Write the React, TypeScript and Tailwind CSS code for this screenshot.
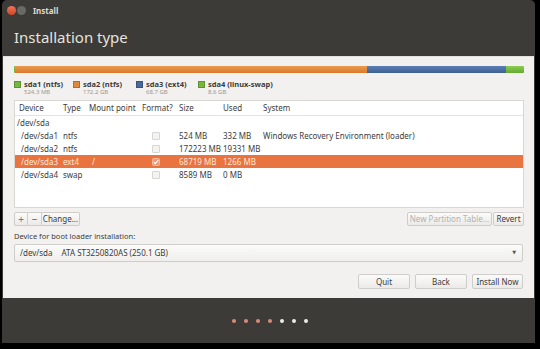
const font = { fontFamily: '"Noto Sans", "DejaVu Sans", sans-serif' };

const cols = "grid grid-cols-[44px_26px_53px_37px_44px_40px_1fr] items-center pl-[4px]";

type Row = {
  dev: string;
  type: string;
  mount: string;
  format: boolean;
  size: string;
  used: string;
  system: string;
  selected?: boolean;
};

const rows: Row[] = [
  { dev: "/dev/sda1", type: "ntfs", mount: "", format: false, size: "524 MB", used: "332 MB", system: "Windows Recovery Environment (loader)" },
  { dev: "/dev/sda2", type: "ntfs", mount: "", format: false, size: "172223 MB", used: "19331 MB", system: "" },
  { dev: "/dev/sda3", type: "ext4", mount: "/", format: true, size: "68719 MB", used: "1266 MB", system: "", selected: true },
  { dev: "/dev/sda4", type: "swap", mount: "", format: false, size: "8589 MB", used: "0 MB", system: "" },
];

const legend = [
  { name: "sda1 (ntfs)", size: "524.3 MB", color: "bg-[#76b83f]", w: "w-[59px]" },
  { name: "sda2 (ntfs)", size: "172.2 GB", color: "bg-[#e0883b]", w: "w-[63px]" },
  { name: "sda3 (ext4)", size: "68.7 GB", color: "bg-[#4a6a9e]", w: "w-[62px]" },
  { name: "sda4 (linux-swap)", size: "8.6 GB", color: "bg-[#76b83f]", w: "w-[90px]" },
];

function Check({ on }: { on: boolean }) {
  if (on) {
    return (
      <svg width="8" height="8" viewBox="0 0 8 8" className="ml-[10px]">
        <rect x="0.5" y="0.5" width="7" height="7" rx="1" fill="#f29a76" stroke="#f6b89c" />
        <path d="M1.8 4.2 L3.3 5.6 L6.3 2.2" stroke="#fff" strokeWidth="1.2" fill="none" />
      </svg>
    );
  }
  return <div className="ml-[10px] h-[8px] w-[8px] rounded-[1px] border border-[#d8d6d3] bg-[#f4f3f2]" />;
}

function Btn({ children, className = "" }: { children: React.ReactNode; className?: string }) {
  return (
    <div
      className={`flex items-center justify-center rounded-[2px] border border-[#cfcdc9] bg-gradient-to-b from-[#fbfbfa] to-[#ebeae8] text-[8px] text-[#3c3c3c] ${className}`}
    >
      {children}
    </div>
  );
}

export default function App() {
  return (
    <div className="h-[349px] w-[540px] overflow-hidden bg-black" style={font}>
      <div className="ml-[2px] flex h-[343px] w-[533px] flex-col overflow-hidden rounded-t-[5px] bg-[#3c3b37]">
        {/* title bar */}
        <div className="flex h-[21px] items-center pl-[5px]">
          <div className="h-[9px] w-[9px] rounded-full bg-gradient-to-b from-[#f0755a] to-[#d04424]" />
          <div className="ml-[1px] h-[9px] w-[9px] rounded-full bg-[#6a6964]" />
          <span className="ml-[7px] text-[8px] font-bold text-[#dfdbd2]">Install</span>
        </div>
        <div className="flex h-[35px] items-center pl-[12px] pb-[2px]">
          <span className="text-[15px] text-[#e6e3de]">Installation type</span>
        </div>

        {/* content */}
        <div className="mx-[1px] flex h-[242px] flex-col border-t border-[#e4e2df] bg-[#f2f1f0] px-[11px] pt-[9px]">
          {/* partition bar */}
          <div className="flex h-[7px] w-[510px] overflow-hidden rounded-[1px]">
            <div className="w-[1px] bg-[#76b83f]" />
            <div className="w-[352px] bg-gradient-to-b from-[#eb9a4e] to-[#d77a2a]" />
            <div className="w-[139px] bg-gradient-to-b from-[#5b7fb5] to-[#3f5f92]" />
            <div className="flex-1 bg-gradient-to-b from-[#8bcc52] to-[#66a832]" />
          </div>

          {/* legend */}
          <div className="mt-[6px] flex">
            {legend.map((l) => (
              <div key={l.name} className={`flex ${l.w}`}>
                <div className={`mt-[2px] h-[7px] w-[7px] border border-black/20 ${l.color}`} />
                <div className="ml-[3px] flex flex-col">
                  <span className="text-[7.5px] font-bold leading-[10px] text-[#3c3c3c]">{l.name}</span>
                  <span className="text-[6px] leading-[7px] text-[#9a9894]">{l.size}</span>
                </div>
              </div>
            ))}
          </div>

          {/* table */}
          <div className="mt-[4px] h-[108px] w-[510px] border border-[#d9d7d3] bg-white text-[8px] text-[#3c3c3c]">
            <div className={`${cols} h-[15px] border-b border-[#e6e4e1]`}>
              <span>Device</span>
              <span>Type</span>
              <span>Mount point</span>
              <span>Format?</span>
              <span>Size</span>
              <span>Used</span>
              <span>System</span>
            </div>
            <div className="flex h-[13px] items-center pl-[2px]">/dev/sda</div>
            {rows.map((r) => (
              <div
                key={r.dev}
                className={`${cols} h-[13px] whitespace-nowrap ${r.selected ? "bg-[#e9743f] text-[#fde7dc]" : ""}`}
              >
                <span className="pl-[2px]">{r.dev}</span>
                <span>{r.type}</span>
                <span className="pl-[3px]">{r.mount}</span>
                <Check on={r.format} />
                <span>{r.size}</span>
                <span>{r.used}</span>
                <span>{r.system}</span>
              </div>
            ))}
          </div>

          {/* partition buttons */}
          <div className="mt-[4px] flex h-[14px] w-[510px] items-center">
            <Btn className="h-[14px] w-[14px] rounded-r-none text-[10px] text-[#777]">+</Btn>
            <Btn className="h-[14px] w-[14px] rounded-none border-l-0 text-[10px] text-[#555]">−</Btn>
            <Btn className="h-[14px] w-[38px] rounded-l-none border-l-0">Change...</Btn>
            <div className="flex-1" />
            <Btn className="h-[14px] w-[85px] text-[#b4b2ae]">New Partition Table...</Btn>
            <Btn className="ml-[1px] h-[14px] w-[31px]">Revert</Btn>
          </div>

          <div className="mt-[5px] text-[7.5px] leading-[10px] text-[#3c3c3c]">Device for boot loader installation:</div>

          {/* combo */}
          <div className="mt-[3px] flex h-[18px] w-[509px] items-center rounded-[2px] border border-[#d0cecb] bg-gradient-to-b from-[#fbfbfa] to-[#efeeec] pl-[5px] pr-[6px] text-[8px] text-[#3c3c3c]">
            <span>/dev/sda</span>
            <span className="ml-[9px]">ATA ST3250820AS (250.1 GB)</span>
            <div className="flex-1" />
            <span className="text-[5px] text-[#555]">▼</span>
          </div>

          {/* bottom buttons */}
          <div className="mt-[12px] flex w-[509px] justify-end gap-[5px]">
            <Btn className="h-[15px] w-[52px]">Quit</Btn>
            <Btn className="h-[15px] w-[52px]">Back</Btn>
            <Btn className="h-[15px] w-[51px] border-[#a9a7a3]">Install Now</Btn>
          </div>
        </div>

        {/* footer */}
        <div className="flex flex-1 items-center justify-center pl-[2px]">
          <div className="flex gap-[8px]">
            {[0, 1, 2, 3].map((i) => (
              <div key={i} className="h-[4px] w-[4px] rounded-full bg-[#d98a78]" />
            ))}
            {[0, 1, 2].map((i) => (
              <div key={i} className="h-[4px] w-[4px] rounded-full bg-[#ecebe8]" />
            ))}
          </div>
        </div>
      </div>
    </div>
  );
}
